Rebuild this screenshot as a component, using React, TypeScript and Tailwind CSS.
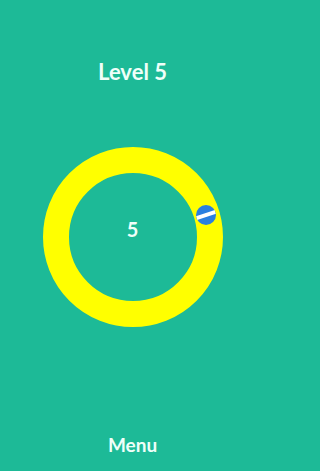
import React from 'react';

const Ball = () => (
  <div className="absolute left-[153px] top-[58px] w-[20px] h-[20px] rounded-full bg-[#2a7fe0] overflow-hidden flex items-center justify-center">
    <div className="w-[26px] h-[4px] bg-white -rotate-[18deg]" />
  </div>
);

export default function App() {
  return (
    <div className="w-full min-h-[471px] bg-[#1dba97]">
      <div
        className="h-[471px] w-[265px] flex flex-col items-center text-[#effff9] font-bold"
        style={{ fontFamily: 'Lato, "Open Sans", sans-serif' }}
      >
        <div className="pt-[58px] text-[22px] leading-7">Level 5</div>

        <div className="relative mt-[61px] w-[180px] h-[180px]">
          <div className="w-full h-full rounded-full border-[26px] border-[#ffff00] flex items-center justify-center pb-4">
            <span className="text-[20px] leading-6">5</span>
          </div>
          <Ball />
        </div>

        <div className="mt-auto pb-[14px] text-[19px] leading-6">Menu</div>
      </div>
    </div>
  );
}
